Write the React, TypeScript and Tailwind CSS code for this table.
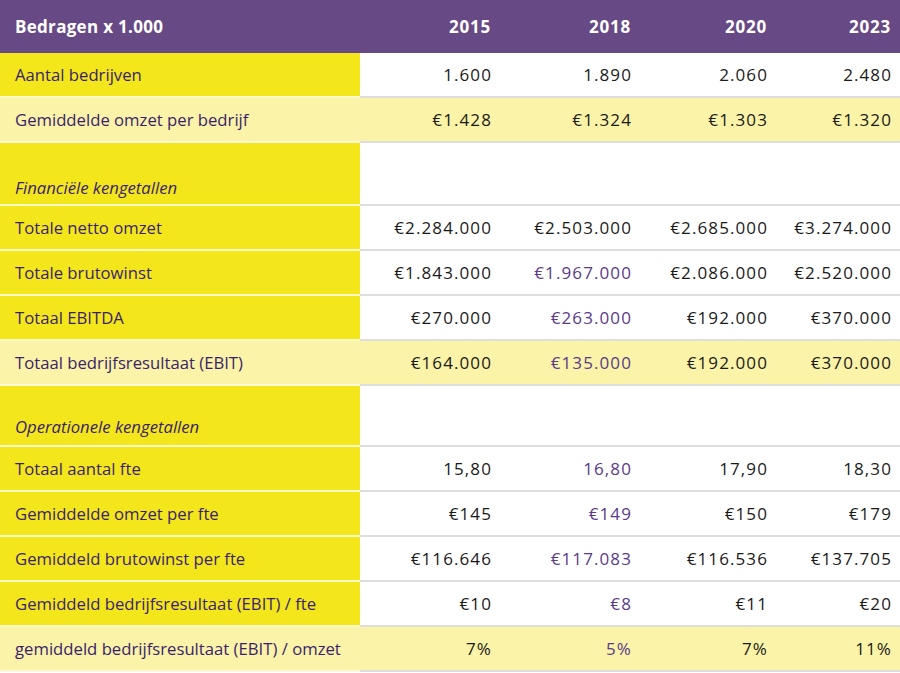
const years = ['2015', '2018', '2020', '2023'];

type Row =
  | { kind: 'row'; label: string; values: string[]; light?: boolean; purple?: number[] }
  | { kind: 'section'; label: string; box: string };

const rows: Row[] = [
  { kind: 'row', label: 'Aantal bedrijven', values: ['1.600', '1.890', '2.060', '2.480'] },
  { kind: 'row', label: 'Gemiddelde omzet per bedrijf', values: ['€1.428', '€1.324', '€1.303', '€1.320'], light: true },
  { kind: 'section', label: 'Financiële kengetallen', box: 'h-[63px] pb-[4px]' },
  { kind: 'row', label: 'Totale netto omzet', values: ['€2.284.000', '€2.503.000', '€2.685.000', '€3.274.000'] },
  { kind: 'row', label: 'Totale brutowinst', values: ['€1.843.000', '€1.967.000', '€2.086.000', '€2.520.000'], purple: [1] },
  { kind: 'row', label: 'Totaal EBITDA', values: ['€270.000', '€263.000', '€192.000', '€370.000'], purple: [1] },
  { kind: 'row', label: 'Totaal bedrijfsresultaat (EBIT)', values: ['€164.000', '€135.000', '€192.000', '€370.000'], light: true, purple: [1] },
  { kind: 'section', label: 'Operationele kengetallen', box: 'h-[61px] pb-[6px]' },
  { kind: 'row', label: 'Totaal aantal fte', values: ['15,80', '16,80', '17,90', '18,30'], purple: [1] },
  { kind: 'row', label: 'Gemiddelde omzet per fte', values: ['€145', '€149', '€150', '€179'], purple: [1] },
  { kind: 'row', label: 'Gemiddeld brutowinst per fte', values: ['€116.646', '€117.083', '€116.536', '€137.705'], purple: [1] },
  { kind: 'row', label: 'Gemiddeld bedrijfsresultaat (EBIT) / fte', values: ['€10', '€8', '€11', '€20'], purple: [1] },
  { kind: 'row', label: 'gemiddeld bedrijfsresultaat (EBIT) / omzet', values: ['7%', '5%', '7%', '11%'], light: true, purple: [1] },
];

export default function App() {
  return (
    <div className="w-[900px] h-[673px] bg-white overflow-hidden text-[16.7px] font-['Open_Sans','Liberation_Sans',sans-serif]">
      <div className="grid grid-cols-[360px_140px_140px_136px_124px]">
        {/* kop */}
        <div className="h-[53px] bg-[#674985] flex items-center pl-[15px] text-white font-bold text-[17px] tracking-[0.3px]">
          Bedragen x 1.000
        </div>
        {years.map((y) => (
          <div
            key={y}
            className="h-[53px] bg-[#674985] flex items-center justify-end pr-[9px] text-white font-bold text-[17px] tracking-[0.8px]"
          >
            {y}
          </div>
        ))}

        {rows.map((r, i) =>
          r.kind === 'section' ? (
            <div key={i} className="contents">
              <div className={`${r.box} bg-[#f3e61b] border-b-2 border-[#fdf8c8] flex items-end pl-[15px] italic text-[#3b1f6c]`}>
                {r.label}
              </div>
              <div className={`${r.box} col-span-4 bg-white border-b-2 border-[#dedede]`} />
            </div>
          ) : (
            <div key={i} className="contents">
              <div
                className={`h-[45px] border-b-2 flex items-center pl-[15px] text-[#3b1f6c] ${
                  r.light ? 'bg-[#faf3a8] border-[#fdf9d8]' : 'bg-[#f3e61b] border-[#fdf8c8]'
                }`}
              >
                {r.label}
              </div>
              {r.values.map((v, j) => (
                <div
                  key={j}
                  className={`h-[45px] border-b-2 border-[#dedede] flex items-center justify-end pr-[8px] text-[17px] tracking-[1.1px] ${
                    r.light ? 'bg-[#faf3a8]' : 'bg-white'
                  } ${r.purple && r.purple.includes(j) ? 'text-[#5a3a8a]' : 'text-[#1a1a1a]'}`}
                >
                  {v}
                </div>
              ))}
            </div>
          )
        )}
      </div>
    </div>
  );
}
